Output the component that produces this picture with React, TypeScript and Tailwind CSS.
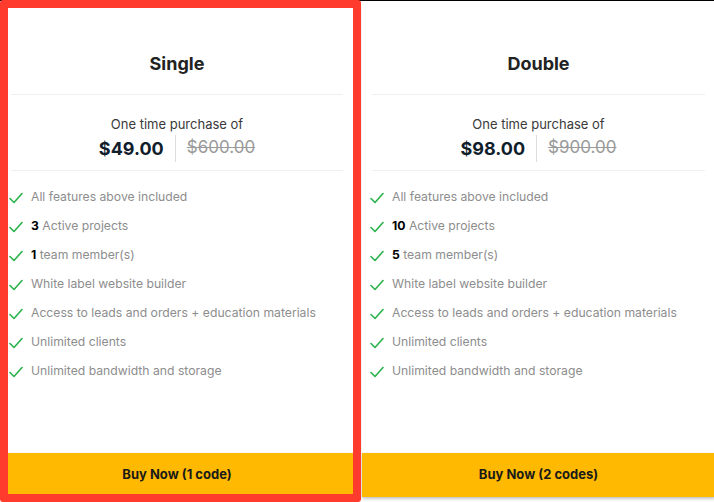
const plans = [
  {
    name: "Single",
    price: "$49.00",
    oldPrice: "$600.00",
    projects: "3",
    members: "1",
    cta: "Buy Now (1 code)",
    width: "w-[352px]",
  },
  {
    name: "Double",
    price: "$98.00",
    oldPrice: "$900.00",
    projects: "10",
    members: "5",
    cta: "Buy Now (2 codes)",
    width: "w-[353px]",
  },
];

const Check = () => (
  <svg width="14" height="12" viewBox="0 0 14 12" fill="none" className="shrink-0">
    <path d="M1 6.5L5 10.5L13 1.5" stroke="#2bb24c" strokeWidth="1.6" strokeLinecap="round" strokeLinejoin="round" />
  </svg>
);

type Plan = (typeof plans)[number];

const Card = ({ plan }: { plan: Plan }) => {
  const features = [
    <>All features above included</>,
    <>
      <b className="font-bold text-black">{plan.projects}</b> Active projects
    </>,
    <>
      <b className="font-bold text-black">{plan.members}</b> team member(s)
    </>,
    <>White label website builder</>,
    <>Access to leads and orders + education materials</>,
    <>Unlimited clients</>,
    <>Unlimited bandwidth and storage</>,
  ];

  return (
    <div className={`${plan.width} flex h-[496px] shrink-0 flex-col bg-white shadow-[0_2px_4px_rgba(0,0,0,0.12)]`}>
      <div className="mx-[10px] h-[94px] border-b border-[#efefef] pt-[53px] text-center">
        <h3 className="text-[18px] leading-[20px] font-bold text-[#222]">{plan.name}</h3>
      </div>
      <div className="mx-[10px] flex h-[76px] flex-col items-center border-b border-[#efefef] pt-[20px]">
        <p className="text-[13px] leading-[18px] text-[#3a3a3a]">One time purchase of</p>
        <div className="mt-[1px] flex h-[28px] items-center">
          <span className="text-[18px] font-bold text-[#10202b]">{plan.price}</span>
          <span className="mx-[11px] h-[27px] border-l border-[#dcdcdc]" />
          <span className="text-[17px] text-[#9a9a9a] line-through">{plan.oldPrice}</span>
        </div>
      </div>
      <ul className="flex flex-col pt-[12px] pl-[8px]">
        {features.map((f, i) => (
          <li key={i} className="flex h-[29px] items-center gap-[8px] text-[12.2px] text-[#8d8d8d]">
            <Check />
            <span>{f}</span>
          </li>
        ))}
      </ul>
      <button className="mt-auto h-[44px] w-full bg-[#ffb900] text-[13px] font-bold text-[#1a1a1a] shadow-[0_1px_3px_rgba(0,0,0,0.2)]">
        {plan.cta}
      </button>
    </div>
  );
};

const App = () => {
  return (
    <div className="relative h-[502px] w-[714px] overflow-hidden bg-white font-['Inter',sans-serif]">
      <div className="h-px bg-black" />
      <div className="flex gap-[9px] pl-[1px]">
        {plans.map((p) => (
          <Card key={p.name} plan={p} />
        ))}
      </div>
      <div className="pointer-events-none absolute top-0 left-0 h-[502px] w-[361px] rounded-[3px] border-[8px] border-[#ff3b2e]" />
    </div>
  );
};

export default App;
